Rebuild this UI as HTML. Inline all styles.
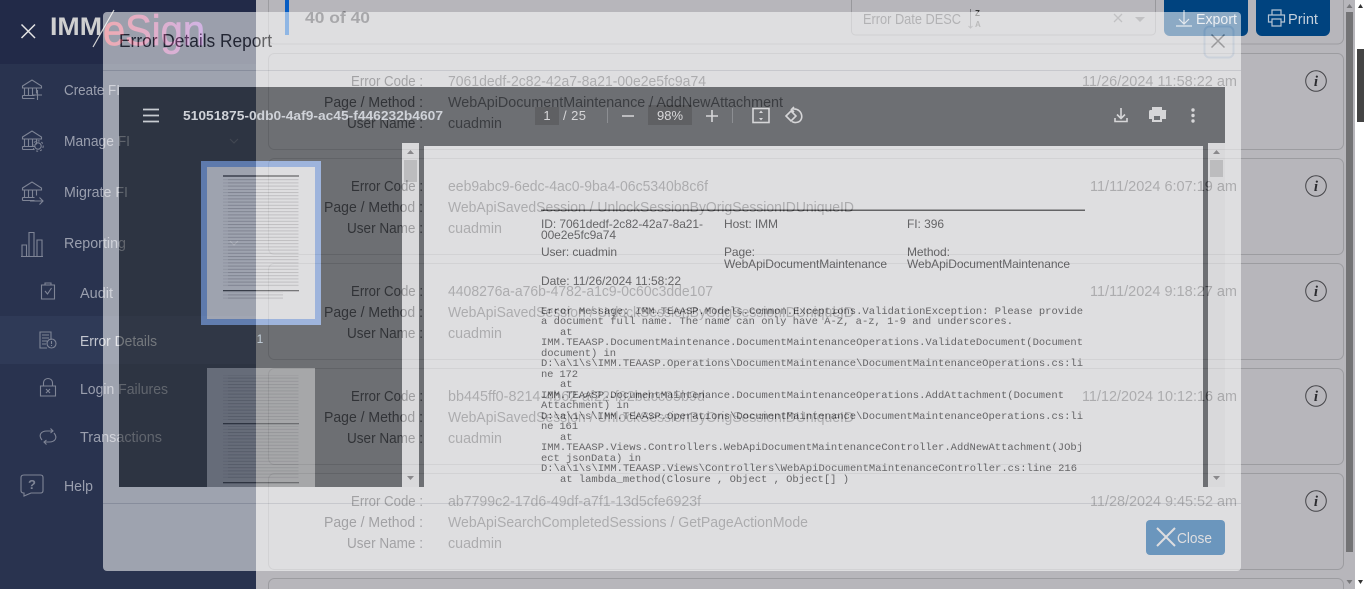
<!DOCTYPE html>
<html lang="en"><head><meta charset="utf-8"><title>Error Details Report</title>
<style>
html,body{margin:0;padding:0;width:1366px;height:589px;overflow:hidden;background:#fff}
svg{display:block;font-family:"Liberation Sans",sans-serif;overflow:hidden}
.l{font-size:14.5px;fill:#303035}
.v{font-size:14.5px;fill:#47474c}
.d{font-size:14.5px;fill:#47474c}
.s{font-size:14.5px;fill:#9a9fae}
.m{font-family:"Liberation Mono",monospace;font-size:10.5px;fill:#222;white-space:pre}
.a{font-size:12px;fill:#222}
.i{fill:none;stroke:#7f8596;stroke-width:1.1}
.t{fill:none;stroke:#f1f1f1;stroke-width:1.6}
</style></head><body>
<svg width="1366" height="589" viewBox="0 0 1366 589" xmlns="http://www.w3.org/2000/svg">
<defs>
<linearGradient id="lg" x1="0" x2="1" y1="0" y2="0"><stop offset="0" stop-color="#dc4455"/><stop offset="1" stop-color="#9a58c4"/></linearGradient>
<clipPath id="pdf"><rect x="119" y="87" width="1106" height="400"/></clipPath>
<pattern id="tx" width="76" height="3.2" patternUnits="userSpaceOnUse"><rect width="70" height="1" fill="#c6c6c6"/><rect x="70" width="6" height="1" fill="#e4e4e4"/></pattern>
<g id="bank" class="i"><path d="M1 7.500L10.500 1.500L20 7.500V9.500H1ZM3 9.500V17M7 9.500V17M11 9.500V17M15 9.500V15M1 17H13M1 20H13M1 17V20"/></g>
<g id="card"><rect x="268.500" y="0" width="1075" height="96" rx="6" fill="#b7b6bb" stroke="#9c9ca0"/></g>
<g id="info"><circle r="10.300" fill="none" stroke="#444448" stroke-width="1"/><text x="0" y="5" text-anchor="middle" font-family="Liberation Serif,serif" font-weight="700" font-style="italic" font-size="15" fill="#2c2c30">i</text></g>
</defs>

<!-- base page -->
<rect width="1366" height="589" fill="#fff"/>
<rect x="256" width="1099" height="589" fill="#b7b6bb"/>
<rect x="0" width="256" height="589" fill="#29334f"/>
<rect width="256" height="64" fill="#222a48"/>
<rect y="316" width="256" height="48" fill="#2f3a57"/>

<!-- sidebar header -->
<path d="M21.500 24.500L35 38M35 24.500L21.500 38" stroke="#e4e4e4" stroke-width="1.500" fill="none"/>
<text x="50" y="35" font-size="25" font-weight="700" fill="#cfcfd0" textLength="52" lengthAdjust="spacingAndGlyphs">IMM</text>
<path d="M114 10L93 47" stroke="#d4d4d4" stroke-width="1.200"/>
<text x="103" y="45" font-size="43" fill="url(#lg)" stroke="url(#lg)" stroke-width=".7" textLength="102" lengthAdjust="spacingAndGlyphs">eSign</text>

<!-- sidebar items -->
<text class="s" x="64" y="95" textLength="56" lengthAdjust="spacingAndGlyphs">Create FI</text>
<text class="s" x="64" y="146" textLength="66" lengthAdjust="spacingAndGlyphs">Manage FI</text>
<text class="s" x="64" y="197" textLength="64" lengthAdjust="spacingAndGlyphs">Migrate FI</text>
<text class="s" x="64" y="248" textLength="62" lengthAdjust="spacingAndGlyphs">Reporting</text>
<text class="s" x="80" y="298" textLength="33" lengthAdjust="spacingAndGlyphs">Audit</text>
<text class="s" x="80" y="346" textLength="77" lengthAdjust="spacingAndGlyphs" style="fill:#c4c7d0">Error Details</text>
<text class="s" x="80" y="394" textLength="88" lengthAdjust="spacingAndGlyphs">Login Failures</text>
<text class="s" x="80" y="442" textLength="82" lengthAdjust="spacingAndGlyphs">Transactions</text>
<text class="s" x="64" y="491" textLength="29" lengthAdjust="spacingAndGlyphs">Help</text>

<use href="#bank" x="21.500" y="78.500"/>
<path class="i" d="M37.500 90V100M33 95H42"/>
<use href="#bank" x="21.500" y="129.500"/>
<circle class="i" cx="38" cy="146" r="3.200"/><circle class="i" cx="38" cy="146" r="5.200" stroke-dasharray="2 2"/>
<use href="#bank" x="21.500" y="180.500"/>
<path class="i" d="M30 201H43M39.500 197.500L43 201L39.500 204.500"/>
<path class="i" d="M21 256.500H43M22 256V245H26.500V256M29 256V232.500H34V256M37 256V240H42V256"/>
<path class="i" d="M41.500 285H54.500V299H41.500ZM45 285V283H51V285M45 291L47.500 294L51.500 288"/>
<path class="i" d="M51 340V332H40V348H47M42 335H49M42 338H49M42 341H47M42 344H46"/><circle class="i" cx="51.500" cy="343.500" r="4.500"/><path class="i" d="M51.500 341V344M51.500 345V346"/>
<path class="i" d="M40.500 386H55.500V396H40.500ZM43.500 386V383C43.500 377 52.500 377 52.500 383V386M46 389L50 393M50 389L46 393"/>
<path class="i" d="M42 440C38 435 41 431 47 431H53M50.500 428.500L53 431L50.500 433M54 433C58 438 55 442 49 442H44M46.500 444.500L44 442L46.500 440"/>
<path class="i" d="M24 475H40.500C42 475 43 476 43 477.500V490.500C43 492 42 493 40.500 493H31L24 496V493C22 493 21 492 21 490.500V477.500C21 476 22 475 24 475Z"/>
<text x="32" y="489" text-anchor="middle" font-size="13" font-weight="700" fill="#7f8596">?</text>
<path class="i" opacity=".5" d="M230 139L234 143L238 139M230 241L234 245L238 241"/>

<!-- top bar -->
<path d="M268.500 0V38A6 6 0 0 0 274.500 44H1337.500A6 6 0 0 0 1343.500 38V0" fill="#b7b6bb" stroke="#9c9ca0"/>
<rect x="285" y="0" width="4" height="35" fill="#075dc3"/>
<text x="305" y="23" font-size="16" font-weight="700" fill="#3d3d42" textLength="65" lengthAdjust="spacingAndGlyphs">40 of 40</text>
<path d="M851.500 0V31A4 4 0 0 0 855.500 35H1151.500A4 4 0 0 0 1155.500 31V0" fill="#b7b6bb" stroke="#98989c"/>
<text x="863" y="24" font-size="14.500" fill="#55555a" textLength="98" lengthAdjust="spacingAndGlyphs">Error Date DESC</text>
<path d="M970.500 9V28M968.500 26L970.500 28L972.500 26" stroke="#77777b" fill="none"/>
<text x="975" y="16" font-size="8" font-weight="700" fill="#333">Z</text>
<text x="975" y="27" font-size="8" font-weight="700" fill="#666">A</text>
<path d="M1114 14L1122 22M1122 14L1114 22" stroke="#77777b" stroke-width="1.300"/>
<path d="M1135 17H1145L1140 22Z" fill="#77777b"/>
<path d="M1164 0V30A6 6 0 0 0 1170 36H1242A6 6 0 0 0 1248 30V0Z" fill="#00437f"/>
<path d="M1184 10V24M1179 19L1184 24L1189 19M1176 26H1192" stroke="#c5d0dc" fill="none" stroke-width="1.200"/>
<text x="1196" y="24" font-size="14.500" fill="#d5dce5" textLength="41" lengthAdjust="spacingAndGlyphs">Export</text>
<path d="M1256 0V30A6 6 0 0 0 1262 36H1324A6 6 0 0 0 1330 30V0Z" fill="#00437f"/>
<path d="M1272 15V10H1281V15M1272 22H1268.500V15H1284.500V22H1281M1272 19H1281V26H1272Z" stroke="#b5c4d4" fill="none" stroke-width="1.200"/>
<text x="1288" y="24" font-size="14.500" fill="#c5d0dc" textLength="30" lengthAdjust="spacingAndGlyphs">Print</text>

<!-- cards -->
<use href="#card" y="53.500"/><use href="#card" y="158.500"/><use href="#card" y="263.500"/><use href="#card" y="368.500"/><use href="#card" y="473.500"/>
<path d="M268.500 589V584.500A6 6 0 0 1 274.500 578.500H1337.500A6 6 0 0 1 1343.500 584.500V589" fill="#b7b6bb" stroke="#9c9ca0"/>

<text class="l" x="351" y="86" textLength="72" lengthAdjust="spacingAndGlyphs">Error Code :</text>
<text class="l" x="324" y="107" textLength="99" lengthAdjust="spacingAndGlyphs">Page / Method :</text>
<text class="l" x="347" y="128" textLength="76" lengthAdjust="spacingAndGlyphs">User Name :</text>
<text class="v" x="448" y="86" textLength="258" lengthAdjust="spacingAndGlyphs">7061dedf-2c82-42a7-8a21-00e2e5fc9a74</text>
<text class="v" x="448" y="107" textLength="335" lengthAdjust="spacingAndGlyphs">WebApiDocumentMaintenance / AddNewAttachment</text>
<text class="v" x="448" y="128" textLength="54" lengthAdjust="spacingAndGlyphs">cuadmin</text>
<text class="d" x="1082" y="86" textLength="155" lengthAdjust="spacingAndGlyphs">11/26/2024 11:58:22 am</text>
<use href="#info" x="1316" y="81"/>

<text class="l" x="351" y="191" textLength="72" lengthAdjust="spacingAndGlyphs">Error Code :</text>
<text class="l" x="324" y="212" textLength="99" lengthAdjust="spacingAndGlyphs">Page / Method :</text>
<text class="l" x="347" y="233" textLength="76" lengthAdjust="spacingAndGlyphs">User Name :</text>
<text class="v" x="448" y="191" textLength="260" lengthAdjust="spacingAndGlyphs">eeb9abc9-6edc-4ac0-9ba4-06c5340b8c6f</text>
<text class="v" x="448" y="212" textLength="406" lengthAdjust="spacingAndGlyphs">WebApiSavedSession / UnlockSessionByOrigSessionIDUniqueID</text>
<text class="v" x="448" y="233" textLength="54" lengthAdjust="spacingAndGlyphs">cuadmin</text>
<text class="d" x="1090" y="191" textLength="147" lengthAdjust="spacingAndGlyphs">11/11/2024 6:07:19 am</text>
<use href="#info" x="1316" y="186"/>

<text class="l" x="351" y="296" textLength="72" lengthAdjust="spacingAndGlyphs">Error Code :</text>
<text class="l" x="324" y="317" textLength="99" lengthAdjust="spacingAndGlyphs">Page / Method :</text>
<text class="l" x="347" y="338" textLength="76" lengthAdjust="spacingAndGlyphs">User Name :</text>
<text class="v" x="448" y="296" textLength="265" lengthAdjust="spacingAndGlyphs">4408276a-a76b-4782-a1c9-0c60c3dde107</text>
<text class="v" x="448" y="317" textLength="406" lengthAdjust="spacingAndGlyphs">WebApiSavedSession / UnlockSessionByOrigSessionIDUniqueID</text>
<text class="v" x="448" y="338" textLength="54" lengthAdjust="spacingAndGlyphs">cuadmin</text>
<text class="d" x="1090" y="296" textLength="147" lengthAdjust="spacingAndGlyphs">11/11/2024 9:18:27 am</text>
<use href="#info" x="1316" y="291"/>

<text class="l" x="351" y="401" textLength="72" lengthAdjust="spacingAndGlyphs">Error Code :</text>
<text class="l" x="324" y="422" textLength="99" lengthAdjust="spacingAndGlyphs">Page / Method :</text>
<text class="l" x="347" y="443" textLength="76" lengthAdjust="spacingAndGlyphs">User Name :</text>
<text class="v" x="448" y="401" textLength="257" lengthAdjust="spacingAndGlyphs">bb445ff0-8214-4b62-af22-f02bdcc05b9d</text>
<text class="v" x="448" y="422" textLength="406" lengthAdjust="spacingAndGlyphs">WebApiSavedSession / UnlockSessionByOrigSessionIDUniqueID</text>
<text class="v" x="448" y="443" textLength="54" lengthAdjust="spacingAndGlyphs">cuadmin</text>
<text class="d" x="1082" y="401" textLength="155" lengthAdjust="spacingAndGlyphs">11/12/2024 10:12:16 am</text>
<use href="#info" x="1316" y="396"/>

<text class="l" x="351" y="506" textLength="72" lengthAdjust="spacingAndGlyphs">Error Code :</text>
<text class="l" x="324" y="527" textLength="99" lengthAdjust="spacingAndGlyphs">Page / Method :</text>
<text class="l" x="347" y="548" textLength="76" lengthAdjust="spacingAndGlyphs">User Name :</text>
<text class="v" x="448" y="506" textLength="253" lengthAdjust="spacingAndGlyphs">ab7799c2-17d6-49df-a7f1-13d5cfe6923f</text>
<text class="v" x="448" y="527" textLength="360" lengthAdjust="spacingAndGlyphs">WebApiSearchCompletedSessions / GetPageActionMode</text>
<text class="v" x="448" y="548" textLength="54" lengthAdjust="spacingAndGlyphs">cuadmin</text>
<text class="d" x="1090" y="506" textLength="147" lengthAdjust="spacingAndGlyphs">11/28/2024 9:45:52 am</text>
<use href="#info" x="1316" y="501"/>

<!-- scrollbars -->
<rect x="1346" y="12" width="7" height="540" fill="#737375"/>
<path d="M1346.500 8L1349.500 4L1352.500 8Z M1346.500 580L1349.500 584L1352.500 580Z" fill="#77777a"/>
<rect x="1355" width="11" height="589" fill="#fff"/>
<rect x="1357" y="49" width="7" height="73" fill="#444"/>
<path d="M1358 8L1360.500 4L1363 8Z M1358 580L1360.500 584L1363 580Z" fill="#333"/>

<!-- modal -->
<g opacity=".55">
<rect x="103" y="12" width="1138" height="559" rx="4" fill="#fff"/>
<text x="119" y="47" font-size="18" fill="#222" textLength="153" lengthAdjust="spacingAndGlyphs">Error Details Report</text>
<rect x="1204.500" y="26.500" width="29" height="31" rx="5" fill="none" stroke="#dce8f4" stroke-width="2"/>
<path d="M1211.500 34.500L1224.500 47.500M1224.500 34.500L1211.500 47.500" stroke="#888" stroke-width="1.500"/>
<path d="M103 70.500H1241M103 503.500H1241" stroke="#d5d8dc"/>

<rect x="1146" y="520" width="79" height="35" rx="4" fill="#2e7dbf"/>
<path d="M1157 528L1175 546M1175 528L1157 546" stroke="#fff" stroke-width="2"/>
<text x="1177" y="543" font-size="15" fill="#fff" textLength="35" lengthAdjust="spacingAndGlyphs">Close</text>

<g clip-path="url(#pdf)">
<rect x="119" y="87" width="1106" height="400" fill="#323639"/>
<!-- thumbs -->
<rect x="201" y="161" width="120" height="164" fill="#8ab4f8"/>
<rect x="207" y="167" width="108" height="152" fill="#fff"/>
<rect x="223" y="175" width="76" height="2" fill="#777"/>
<rect x="223" y="178" width="76" height="9" fill="url(#tx)"/>
<rect x="223" y="189" width="76" height="98" fill="url(#tx)"/>
<rect x="223" y="290" width="76" height="1.300" fill="#444"/>
<rect x="223" y="292" width="60" height="7" fill="url(#tx)"/>
<g opacity=".5">
<rect x="207" y="368" width="108" height="130" fill="#fff"/>
<rect x="223" y="375" width="76" height="45" fill="url(#tx)"/>
<rect x="223" y="423" width="76" height="1.300" fill="#333"/>
<rect x="223" y="426" width="76" height="53" fill="url(#tx)"/>
<rect x="223" y="482" width="76" height="1.300" fill="#333"/>
</g>
<!-- page -->
<rect x="424" y="146" width="779" height="341" fill="#fff"/>
<rect x="541" y="209.500" width="544" height="1.500" fill="#222"/>
<text class="a" x="541" y="228" textLength="162">ID: 7061dedf-2c82-42a7-8a21-</text>
<text class="a" x="541" y="239" textLength="75">00e2e5fc9a74</text>
<text class="a" x="541" y="256" textLength="76">User: cuadmin</text>
<text class="a" x="541" y="285" textLength="140">Date: 11/26/2024 11:58:22</text>
<text class="a" x="724" y="228" textLength="54">Host: IMM</text>
<text class="a" x="724" y="256" textLength="31">Page:</text>
<text class="a" x="724" y="268" textLength="163">WebApiDocumentMaintenance</text>
<text class="a" x="907" y="228" textLength="37">FI: 396</text>
<text class="a" x="907" y="256" textLength="43">Method:</text>
<text class="a" x="907" y="268" textLength="163">WebApiDocumentMaintenance</text>
<text class="m" x="541" y="314" textLength="542">Error Message: IMM.TEAASP.Models.Common.Exceptions.ValidationException: Please provide</text>
<text class="m" x="541" y="324" textLength="472">a document full name. The name can only have A-Z, a-z, 1-9 and underscores.</text>
<text class="m" x="560" y="335">at</text>
<text class="m" x="541" y="345" textLength="542">IMM.TEAASP.DocumentMaintenance.DocumentMaintenanceOperations.ValidateDocument(Document</text>
<text class="m" x="541" y="356" textLength="75">document) in</text>
<text class="m" x="541" y="366" textLength="542">D:\a\1\s\IMM.TEAASP.Operations\DocumentMaintenance\DocumentMaintenanceOperations.cs:li</text>
<text class="m" x="541" y="377" textLength="37">ne 172</text>
<text class="m" x="560" y="387">at</text>
<text class="m" x="541" y="398" textLength="523">IMM.TEAASP.DocumentMaintenance.DocumentMaintenanceOperations.AddAttachment(Document</text>
<text class="m" x="541" y="408" textLength="88">Attachment) in</text>
<text class="m" x="541" y="419" textLength="542">D:\a\1\s\IMM.TEAASP.Operations\DocumentMaintenance\DocumentMaintenanceOperations.cs:li</text>
<text class="m" x="541" y="429" textLength="37">ne 161</text>
<text class="m" x="560" y="440">at</text>
<text class="m" x="541" y="450" textLength="542">IMM.TEAASP.Views.Controllers.WebApiDocumentMaintenanceController.AddNewAttachment(JObj</text>
<text class="m" x="541" y="461" textLength="100">ect jsonData) in</text>
<text class="m" x="541" y="471" textLength="536">D:\a\1\s\IMM.TEAASP.Views\Controllers\WebApiDocumentMaintenanceController.cs:line 216</text>
<text class="m" x="560" y="482" textLength="289">at lambda_method(Closure , Object , Object[] )</text>
<!-- toolbar -->
<rect x="119" y="87" width="1106" height="59" fill="#323639"/>
<!-- scrollbars in viewer -->
<rect x="402" y="143" width="17" height="344" fill="#f6f6f6"/>
<rect x="404" y="160" width="13" height="22" fill="#c1c1c1"/>
<path d="M407 154L410.500 150L414 154Z M407 476L410.500 480L414 476Z" fill="#666"/>
<rect x="1208" y="143" width="17" height="344" fill="#f6f6f6"/>
<rect x="1210" y="160" width="13" height="17" fill="#c1c1c1"/>
<path d="M1213 154L1216.500 150L1220 154Z M1213 476L1216.500 480L1220 476Z" fill="#666"/>
<!-- toolbar contents -->
<rect x="535" y="107" width="24" height="18" fill="#191b1c"/>
<text x="547" y="120" text-anchor="middle" font-size="13" fill="#f1f1f1">1</text>
<text x="563" y="120" font-size="13" fill="#f1f1f1" textLength="23">/ 25</text>
<path d="M607.500 108V123M732.500 108V123" stroke="#6a6e71"/>
<path d="M622 116H634M706 116H718M712 110V122" class="t"/>
<rect x="648" y="105" width="44" height="20" fill="#191b1c"/>
<text x="670" y="120" text-anchor="middle" font-size="13" fill="#f1f1f1">98%</text>
<rect class="t" x="753" y="108.500" width="16" height="14"/>
<path d="M761 110.500L763 113H759ZM761 120.500L763 118H759Z" fill="#f1f1f1"/>
<path class="t" d="M793 109C803 108 805 122 796 122.500C794.500 122.700 793 122.300 792 121.500M786 116L791 111L796 116L791 121Z M794 107L791.500 109.500L794 112"/>
<path class="t" d="M1121 108V118M1117 114.500L1121 118.500L1125 114.500M1115 118V121.500H1127V118"/>
<path d="M1152 107H1162V110H1166C1166.500 110 1166 111 1166 112V119H1162V122H1152V119H1149V112C1149 111 1149.500 110 1150 110H1152ZM1154 116V120H1160V116Z" fill="#f1f1f1" fill-rule="evenodd"/>
<circle cx="1193" cy="110" r="1.700" fill="#f1f1f1"/><circle cx="1193" cy="115.500" r="1.700" fill="#f1f1f1"/><circle cx="1193" cy="121" r="1.700" fill="#f1f1f1"/>
</g>
</g>
<!-- brighter viewer labels -->
<path d="M143 109.500H159M143 115.500H159M143 121.500H159" stroke="#c8ccd2" stroke-width="1.700"/>
<text x="183" y="120" font-size="13" font-weight="700" fill="#cfd2d8" textLength="260" lengthAdjust="spacingAndGlyphs">51051875-0db0-4af9-ac45-f446232b4607</text>
<text x="260" y="343" text-anchor="middle" font-size="12" fill="#c4d0dc">1</text>
</svg>
</body></html>
